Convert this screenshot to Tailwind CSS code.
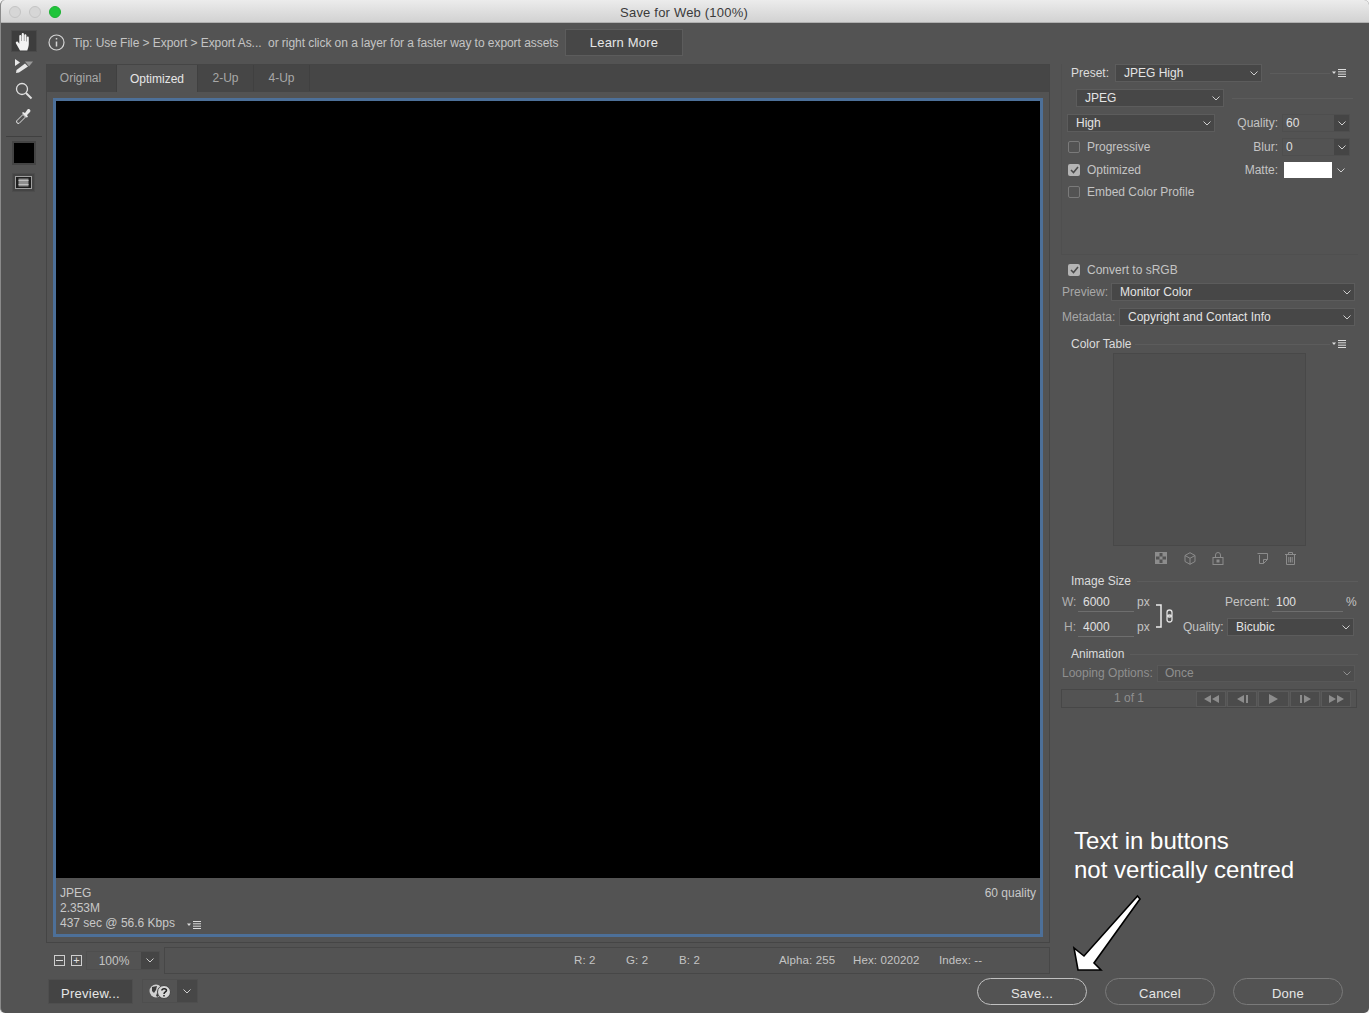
<!doctype html>
<html lang="en">
<head>
  <meta charset="utf-8">
  <title>Save for Web (100%)</title>
  <script src="https://cdn.jsdelivr.net/npm/@tailwindcss/browser@4"></script>
</head>
<body class="bg-[#f4f4f4] font-['Liberation_Sans',Arial,sans-serif] text-[12px] text-[#c4c4c4] overflow-hidden">
<div class="relative w-[1369px] h-[1013px] rounded-[5px] overflow-hidden bg-[#535353] border-l border-[#8a8a8a] flex flex-col">

  <!-- Title bar -->
  <header class="relative h-[23px] shrink-0 bg-gradient-to-b from-[#ececec] to-[#d2d2d2] border-b border-[#b0b0b0] flex items-center justify-center pt-[3px] pr-[2px] text-[13px] tracking-[0.2px] text-[#3a3a3a]">
    <div class="absolute left-[8px] top-[6px] flex gap-[8px]">
      <span class="w-[12px] h-[12px] rounded-full bg-[#d6d6d6] border border-[#c4c4c4]"></span>
      <span class="w-[12px] h-[12px] rounded-full bg-[#d6d6d6] border border-[#c4c4c4]"></span>
      <span class="w-[12px] h-[12px] rounded-full bg-[#1fc43a] border border-[#1db133]"></span>
    </div>
    Save for Web (100%)
  </header>

  <div class="flex h-[952px] shrink-0">
    <!-- Tools -->
    <aside class="w-[45px] shrink-0 flex flex-col items-center pt-[7px]">
      <div class="w-[26px] h-[22px] bg-[#3d3d3d] border border-[#4a4a4a] flex items-center justify-center">
        <svg width="18" height="19" viewBox="0 0 18 19" fill="#f2f2f2"><path d="M5 18.500 1 11.500c-.8-1.400 1-2.600 2-1.400L4.300 11.800V4c0-1.500 2-1.500 2 0V9h.4V2.300c0-1.600 2.200-1.600 2.200 0V9h.4V3.300c0-1.500 2.100-1.500 2.100 0V9.500h.4V5.500c0-1.500 2-1.500 2 0V12c0 2.500-1 4.500-1.500 6.500Z"/></svg>
      </div>
      <svg class="mt-[6px]" width="20" height="16" viewBox="0 0 20 16"><path d="M1 1 6 4.500 1 8Z" fill="#e8e8e8"/><path d="M11 3.500h8l-4 5Z" fill="#9a9a9a"/><path d="M11 5.500 14 8.500 5 14.500 2 15 2.500 12Z" fill="#e8e8e8"/></svg>
      <svg class="mt-[8px]" width="18" height="18" viewBox="0 0 18 18" fill="none" stroke="#e0e0e0"><circle cx="7" cy="7" r="5.500" stroke-width="1.300"/><path d="M11 11l5.500 5.500" stroke-width="2"/></svg>
      <svg class="mt-[7px]" width="18" height="18" viewBox="0 0 18 18" fill="none"><path d="M2 16 1.500 14 8 7.500 10.500 10 4 16.500Z" stroke="#e0e0e0"/><path d="M8 5 10 6 12.500 2.500C14 1 16.500 3.500 15 5L12 8 13 10 11.500 10.500 7 6Z" fill="#e8e8e8"/></svg>
      <div class="w-[36px] h-px bg-[#404040] mt-[11px]"></div>
      <div class="mt-[4px] w-[24px] h-[24px] bg-black border-[2px] border-[#444]"></div>
      <div class="mt-[8px] w-[23px] h-[19px] bg-[#444] border border-[#4c4c4c] flex items-center justify-center">
        <svg width="17" height="13" viewBox="0 0 17 13"><rect x=".5" y=".5" width="16" height="12" fill="#1e1e1e" stroke="#a0a0a0"/><rect x="3.500" y="2.500" width="10" height="8" fill="#8e8e8e"/><path d="M3.500 4.500h10M3.500 8.500h10" stroke="#bdbdbd"/></svg>
      </div>
    </aside>

    <!-- Centre -->
    <main class="w-[1004px] shrink-0 flex flex-col">
      <div class="h-[41px] shrink-0 flex items-center pl-[2px] pb-[2px]">
        <svg width="17" height="17" viewBox="0 0 17 17" fill="none" stroke="#d4d4d4" stroke-width="1.200"><circle cx="8.500" cy="8.500" r="7.500"/><path d="M8.500 7.500v5M8.500 4v1.500" stroke-width="1.500"/></svg>
        <span class="ml-[8px] whitespace-pre tracking-[-0.05px]">Tip: Use File &gt; Export &gt; Export As...  or right click on a layer for a faster way to export assets</span>
        <div class="ml-[6px] w-[118px] h-[27px] pt-[1px] pl-[1px] bg-[#474747] border border-[#5c5c5c] flex items-center justify-center text-[13px] tracking-[0.2px] text-[#e6e6e6]">Learn More</div>
      </div>

      <section class="h-[879px] shrink-0 border border-[#454545] flex flex-col">
        <div class="h-[27px] shrink-0 bg-[#464646] flex border-b border-[#464646]">
          <div class="w-[69px] pr-[2px] flex items-center justify-center text-[#a8a8a8]">Original</div>
          <div class="w-[82px] -mb-px bg-[#535353] flex items-center justify-center text-[#e6e6e6] border-x border-[#404040]">Optimized</div>
          <div class="w-[56px] flex items-center justify-center text-[#a8a8a8] border-r border-[#404040]">2-Up</div>
          <div class="w-[56px] flex items-center justify-center text-[#a8a8a8] border-r border-[#404040]">4-Up</div>
        </div>
        <div class="flex-1 px-[6px] pt-[6px]">
          <div class="h-[839px] border-[3px] border-[#4d7099] flex flex-col">
            <div class="h-[777px] shrink-0 bg-black"></div>
            <div class="flex-1 flex justify-between px-[4px] pt-[8px] leading-[15px] text-[#c8c8c8]">
              <div>
                <div>JPEG</div>
                <div>2.353M</div>
                <div class="flex items-center">437 sec @ 56.6 Kbps
                  <svg class="ml-[12px] mt-[2px]" width="14" height="8" viewBox="0 0 14 8"><path d="M0 2.500h4L2 5Z" fill="#ddd"/><path d="M6 .5h8M6 2.800h8M6 5.200h8M6 7.500h8" stroke="#ddd"/></svg>
                </div>
              </div>
              <div>60 quality</div>
            </div>
          </div>
        </div>
      </section>

      <div class="h-[32px] shrink-0 flex items-center pt-[2px]">
        <span class="ml-[8px] w-[11px] h-[11px] border border-[#cfcfcf] flex items-center justify-center"><span class="w-[7px] h-px bg-[#dcdcdc]"></span></span>
        <span class="ml-[6px] w-[11px] h-[11px] border border-[#cfcfcf] flex items-center justify-center text-[11px] leading-none text-[#e0e0e0]">+</span>
        <div class="ml-[4px] w-[74px] h-[19px] border border-[#4e4e4e] flex items-stretch">
          <span class="flex-1 pt-[1px] flex items-center justify-center">100%</span>
          <span class="w-[18px] bg-[#454545] flex items-center justify-center"><svg width="8" height="5" viewBox="0 0 8 5" fill="none" stroke="#cfcfcf"><path d="M.5.5 4 4 7.500.5"/></svg></span>
        </div>
        <div class="ml-[4px] flex-1 h-[27px] pt-[1px] border border-[#474747] flex items-center gap-0 text-[11.500px] tracking-[0.12px]">
          <span class="ml-[409px] w-[52px]">R: 2</span>
          <span class="w-[53px]">G: 2</span>
          <span class="w-[100px]">B: 2</span>
          <span class="w-[74px]">Alpha: 255</span>
          <span class="w-[86px]">Hex: 020202</span>
          <span>Index: --</span>
        </div>
      </div>
    </main>

    <!-- Settings -->
    <aside class="flex-1 pl-[1px] pt-[41px]">
      <div class="ml-[10px] w-[297px] h-[191px] border-l border-b border-[#4f4f4f]">
        <div class="-ml-[12px] w-[319px]">
          <div class="flex h-[18px] items-center">
            <span class="ml-[21px] w-[44px] text-[#dcdcdc]">Preset:</span>
            <div class="w-[147px] h-[18px] bg-[#474747] border border-[#5c5c5c] flex items-center justify-between pl-[8px] pr-[3px] text-[#e4e4e4]">JPEG High<svg width="8" height="5" viewBox="0 0 8 5" fill="none" stroke="#cfcfcf"><path d="M.5.5 4 4 7.500.5"/></svg></div>
            <div class="ml-[8px] w-[60px] h-px bg-[#5c5c5c]"></div>
            <svg class="ml-[2px]" width="14" height="8" viewBox="0 0 14 8"><path d="M0 2.500h4L2 5Z" fill="#ddd"/><path d="M6 .5h8M6 2.800h8M6 5.200h8M6 7.500h8" stroke="#ddd"/></svg>
          </div>
          <div class="flex mt-[7px] h-[18px] items-center">
            <div class="ml-[26px] w-[148px] h-[18px] bg-[#474747] border border-[#5c5c5c] flex items-center justify-between pl-[8px] pr-[3px] text-[#e4e4e4]">JPEG<svg width="8" height="5" viewBox="0 0 8 5" fill="none" stroke="#cfcfcf"><path d="M.5.5 4 4 7.500.5"/></svg></div>
            <div class="ml-[8px] w-[121px] h-px bg-[#5c5c5c]"></div>
          </div>
          <div class="flex mt-[7px] h-[18px] items-center pr-[19px]">
            <div class="ml-[17px] w-[148px] h-[18px] bg-[#474747] border border-[#5c5c5c] flex items-center justify-between pl-[8px] pr-[3px] text-[#e4e4e4]">High<svg width="8" height="5" viewBox="0 0 8 5" fill="none" stroke="#cfcfcf"><path d="M.5.5 4 4 7.500.5"/></svg></div>
            <span class="flex-1 text-right">Quality:</span>
            <div class="ml-[4px] w-[68px] h-[18px] border border-[#4e4e4e] flex items-stretch text-[#e0e0e0]"><span class="flex-1 pl-[3px] flex items-center">60</span><span class="w-[15px] bg-[#454545] flex items-center justify-center"><svg width="8" height="5" viewBox="0 0 8 5" fill="none" stroke="#cfcfcf"><path d="M.5.5 4 4 7.500.5"/></svg></span></div>
          </div>
          <div class="flex mt-[6px] h-[18px] items-center pr-[19px]">
            <span class="ml-[18px] w-[12px] h-[12px] border border-[#7a7a7a] rounded-[2px]"></span>
            <span class="ml-[7px] flex-1">Progressive</span>
            <span>Blur:</span>
            <div class="ml-[4px] w-[68px] h-[18px] border border-[#4e4e4e] flex items-stretch text-[#e0e0e0]"><span class="flex-1 pl-[3px] flex items-center">0</span><span class="w-[15px] bg-[#454545] flex items-center justify-center"><svg width="8" height="5" viewBox="0 0 8 5" fill="none" stroke="#cfcfcf"><path d="M.5.5 4 4 7.500.5"/></svg></span></div>
          </div>
          <div class="flex mt-[5px] h-[18px] items-center pr-[19px]">
            <span class="ml-[18px] w-[12px] h-[12px] bg-[#b4b4b4] rounded-[2px] flex items-center justify-center"><svg width="9" height="8" viewBox="0 0 9 8" fill="none" stroke="#4a4a4a" stroke-width="1.600"><path d="M1 4 3.500 6.500 8 1"/></svg></span>
            <span class="ml-[7px] flex-1">Optimized</span>
            <span>Matte:</span>
            <div class="ml-[6px] w-[66px] h-[16px] flex items-stretch"><span class="flex-1 bg-white"></span><span class="w-[18px] flex items-center justify-center"><svg width="8" height="5" viewBox="0 0 8 5" fill="none" stroke="#cfcfcf"><path d="M.5.5 4 4 7.500.5"/></svg></span></div>
          </div>
          <div class="flex mt-[4px] h-[18px] items-center">
            <span class="ml-[18px] w-[12px] h-[12px] border border-[#7a7a7a] rounded-[2px]"></span>
            <span class="ml-[7px]">Embed Color Profile</span>
          </div>
        </div>
      </div>
      <div class="flex mt-[6px] h-[18px] items-center">
        <span class="ml-[17px] w-[12px] h-[12px] bg-[#b4b4b4] rounded-[2px] flex items-center justify-center"><svg width="9" height="8" viewBox="0 0 9 8" fill="none" stroke="#4a4a4a" stroke-width="1.600"><path d="M1 4 3.500 6.500 8 1"/></svg></span>
        <span class="ml-[7px]">Convert to sRGB</span>
      </div>
      <div class="flex mt-[4px] h-[18px] items-center">
        <span class="ml-[11px] w-[49px] text-[#a8a8a8]">Preview:</span>
        <div class="w-[244px] h-[18px] bg-[#474747] border border-[#5c5c5c] flex items-center justify-between pl-[8px] pr-[3px] text-[#e4e4e4]">Monitor Color<svg width="8" height="5" viewBox="0 0 8 5" fill="none" stroke="#cfcfcf"><path d="M.5.5 4 4 7.500.5"/></svg></div>
      </div>
      <div class="flex mt-[7px] h-[18px] items-center">
        <span class="ml-[11px] w-[57px] text-[#a8a8a8]">Metadata:</span>
        <div class="w-[236px] h-[18px] bg-[#474747] border border-[#5c5c5c] flex items-center justify-between pl-[8px] pr-[3px] text-[#e4e4e4]">Copyright and Contact Info<svg width="8" height="5" viewBox="0 0 8 5" fill="none" stroke="#cfcfcf"><path d="M.5.5 4 4 7.500.5"/></svg></div>
      </div>
      <div class="flex mt-[9px] h-[18px] items-center">
        <span class="ml-[20px] w-[62px] text-[#dcdcdc]">Color Table</span>
        <div class="ml-[2px] w-[195px] h-px bg-[#5c5c5c]"></div>
        <svg class="ml-[2px]" width="14" height="8" viewBox="0 0 14 8"><path d="M0 2.500h4L2 5Z" fill="#ddd"/><path d="M6 .5h8M6 2.800h8M6 5.200h8M6 7.500h8" stroke="#ddd"/></svg>
      </div>
      <div class="ml-[62px] w-[193px] h-[193px] bg-[#4f4f4f] border border-[#484848]"></div>
      <div class="flex mt-[5px] h-[14px] items-center text-[#8c8c8c]">
        <svg class="ml-[104px]" width="12" height="12" viewBox="0 0 12 12"><rect x=".5" y=".5" width="11" height="11" fill="none" stroke="#8c8c8c"/><path d="M1 1h3.500v3.500H1ZM7.500 1H11v3.500H7.500ZM4.500 4.500h3v3h-3ZM1 7.500h3.500V11H1ZM7.500 7.500H11V11H7.500Z" fill="#8c8c8c"/></svg>
        <svg class="ml-[17px] mt-[1px]" width="12" height="13" viewBox="0 0 12 13" fill="none" stroke="#8c8c8c"><path d="M6 .7 11 3.500v6L6 12.300 1 9.500v-6ZM1 3.500 6 6.300l5-2.800M6 6.300v6"/></svg>
        <svg class="ml-[16px]" width="12" height="13" viewBox="0 0 12 13" fill="none" stroke="#8c8c8c"><rect x="1" y="5.500" width="10" height="7"/><path d="M3.500 5.500V3a2.500 2.500 0 0 1 5 0v2.500"/><rect x="5" y="8" width="2" height="2" fill="#8c8c8c"/></svg>
        <svg class="ml-[33px] mt-[1px]" width="11" height="11" viewBox="0 0 11 11" fill="none" stroke="#8c8c8c"><path d="M.5.5h10v6l-4 4h-4v-8.500"/><path d="M6.500 10.500v-4h4"/></svg>
        <svg class="ml-[17px] mt-[1px]" width="11" height="13" viewBox="0 0 11 13" fill="none" stroke="#8c8c8c"><path d="M0 2.500h11M3.500 2.500V.5h4v2M1.500 2.500v10h8v-10M3.800 5v5.500M5.500 5v5.500M7.200 5v5.500"/></svg>
      </div>
      <div class="flex mt-[7px] h-[18px] items-center">
        <span class="ml-[20px] text-[#dcdcdc]">Image Size</span>
        <div class="ml-[6px] flex-1 mr-[11px] h-px bg-[#5c5c5c]"></div>
      </div>
      <div class="flex mt-[3px] h-[18px] items-center">
        <span class="ml-[11px] w-[16px] text-[#b0b0b0]">W:</span>
        <span class="w-[56px] h-[19px] pl-[5px] border-b border-[#6e6e6e] flex items-center text-[#e0e0e0]">6000</span>
        <span class="ml-[3px] w-[19px]">px</span>
        <svg class="self-start mt-[11px] shrink-0 overflow-visible" width="18" height="24" viewBox="0 0 18 24" fill="none"><path d="M0 1h5v22H0" stroke="#ececec" stroke-width="1.500"/><rect x="11" y="6" width="5" height="7" rx="2.500" stroke="#e0e0e0" stroke-width="1.300"/><rect x="11" y="11" width="5" height="7" rx="2.500" stroke="#e0e0e0" stroke-width="1.300"/></svg>
        <span class="ml-[51px] w-[47px]">Percent:</span>
        <span class="w-[71px] h-[19px] pl-[4px] border-b border-[#6e6e6e] flex items-center text-[#e0e0e0]">100</span>
        <span class="ml-[3px]">%</span>
      </div>
      <div class="flex mt-[7px] h-[18px] items-center">
        <span class="ml-[13px] w-[14px] text-[#b0b0b0]">H:</span>
        <span class="w-[56px] h-[19px] pl-[5px] border-b border-[#6e6e6e] flex items-center text-[#e0e0e0]">4000</span>
        <span class="ml-[3px] w-[19px]">px</span>
        <span class="ml-[27px] w-[44px]">Quality:</span>
        <div class="w-[127px] h-[18px] bg-[#474747] border border-[#5c5c5c] flex items-center justify-between pl-[8px] pr-[3px] text-[#e4e4e4]">Bicubic<svg width="8" height="5" viewBox="0 0 8 5" fill="none" stroke="#cfcfcf"><path d="M.5.5 4 4 7.500.5"/></svg></div>
      </div>
      <div class="flex mt-[9px] h-[18px] items-center">
        <span class="ml-[20px] text-[#dcdcdc]">Animation</span>
        <div class="ml-[6px] flex-1 mr-[11px] h-px bg-[#5c5c5c]"></div>
      </div>
      <div class="flex mt-[2px] h-[16px] items-center text-[#8f8f8f]">
        <span class="ml-[11px] w-[95px]">Looping Options:</span>
        <div class="w-[198px] h-[17px] bg-[#4d4d4d] border border-[#585858] flex items-center justify-between pl-[7px] pr-[3px]">Once<svg width="8" height="5" viewBox="0 0 8 5" fill="none" stroke="#8f8f8f"><path d="M.5.5 4 4 7.500.5"/></svg></div>
      </div>
      <div class="ml-[10px] mt-[8px] w-[296px] h-[19px] border border-[#474747] flex items-center text-[#8f8f8f]">
        <span class="w-[134px] pb-[2px] text-center">1 of 1</span>
        <div class="flex gap-[1px]">
          <span class="w-[30px] h-[16px] bg-[#4b4b4b] border border-[#5a5a5a] flex items-center justify-center"><svg width="15" height="8" viewBox="0 0 15 8" fill="#8c8c8c"><path d="M7 0v8L0 4ZM15 0v8L8 4Z"/></svg></span>
          <span class="w-[30px] h-[16px] bg-[#4b4b4b] border border-[#5a5a5a] flex items-center justify-center"><svg width="11" height="8" viewBox="0 0 11 8" fill="#8c8c8c"><path d="M7 0v8L0 4ZM9 0h2v8H9Z"/></svg></span>
          <span class="w-[31px] h-[16px] bg-[#4b4b4b] border border-[#5a5a5a] flex items-center justify-center"><svg width="9" height="10" viewBox="0 0 9 10" fill="#8c8c8c"><path d="M0 0v10l9-5Z"/></svg></span>
          <span class="w-[30px] h-[16px] bg-[#4b4b4b] border border-[#5a5a5a] flex items-center justify-center"><svg width="11" height="8" viewBox="0 0 11 8" fill="#8c8c8c"><path d="M4 0v8l7-4ZM0 0h2v8H0Z"/></svg></span>
          <span class="w-[30px] h-[16px] bg-[#4b4b4b] border border-[#5a5a5a] flex items-center justify-center"><svg width="15" height="8" viewBox="0 0 15 8" fill="#8c8c8c"><path d="M0 0v8l7-4ZM8 0v8l7-4Z"/></svg></span>
        </div>
      </div>
    </aside>
  </div>

  <!-- Bottom buttons -->
  <footer class="flex items-start h-[38px] text-[13px] tracking-[0.25px] text-[#e6e6e6]">
    <div class="ml-[47px] w-[85px] h-[25px] mt-[4px] pt-[4px] bg-[#444] border border-[#4e4e4e] flex items-center justify-center">Preview...</div>
    <div class="ml-[9px] w-[56px] h-[24px] mt-[4px] border border-[#4e4e4e] flex items-stretch">
      <span class="flex-1 flex items-center justify-center"><svg width="22" height="15" viewBox="0 0 22 15"><circle cx="7" cy="7" r="6.500" fill="#d0d0d0"/><path d="M3 3 8 2 7 6 5 9 3 7ZM8 9l2 1-1 3-2-1Z" fill="#3c3c3c"/><circle cx="15" cy="8" r="6.500" fill="#d8d8d8" stroke="#444"/><path d="M12.800 6.500C13 4 17.500 4 17.500 6.500 17.500 8 15 8 15 10M15 11v1.500" fill="none" stroke="#222" stroke-width="1.500"/></svg></span>
      <span class="w-[20px] bg-[#474747] flex items-center justify-center"><svg width="8" height="5" viewBox="0 0 8 5" fill="none" stroke="#cfcfcf"><path d="M.5.5 4 4 7.500.5"/></svg></span>
    </div>
    <div class="ml-[779px] mt-[3px] w-[110px] h-[27px] pt-[4px] rounded-full border border-[#c0c0c0] flex items-center justify-center">Save...</div>
    <div class="ml-[18px] mt-[3px] w-[110px] h-[27px] pt-[4px] rounded-full border border-[#7a7a7a] flex items-center justify-center">Cancel</div>
    <div class="ml-[18px] mt-[3px] w-[110px] h-[27px] pt-[4px] rounded-full border border-[#7a7a7a] flex items-center justify-center">Done</div>
  </footer>

  <!-- Annotation on top of the window -->
  <div class="absolute left-[1073px] top-[826px] text-[24px] leading-[29px] text-white">Text in buttons<br>not vertically centred</div>
  <svg class="absolute left-0 top-0 pointer-events-none" width="1369" height="1013" viewBox="0 0 1369 1013"><path d="M1136.500 896 1139 899 1093 963 1100 970 1077 970 1073 948 1083 956Z" fill="#fff" stroke="#000" stroke-width="1.600"/></svg>
</div>
</body>
</html>
